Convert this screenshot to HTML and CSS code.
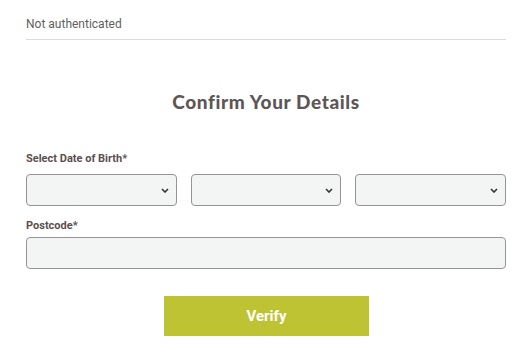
FILE: index.html
```html
<!DOCTYPE html>
<html>
<head>
<meta charset="utf-8">
<link rel="stylesheet" href="styles.css">
</head>
<body>
<div class="page">
  <div class="status">Not authenticated</div>
  <h1 class="title">Confirm Your Details</h1>
  <form class="form">
    <label class="label">Select Date of Birth*</label>
    <div class="dob">
      <div class="select-wrap">
        <select class="field"><option></option></select>
        <svg class="chev" width="8" height="5" viewBox="0 0 8 5"><path d="M1 1l3 3 3-3" fill="none" stroke="#333" stroke-width="1.6"/></svg>
      </div>
      <div class="select-wrap">
        <select class="field"><option></option></select>
        <svg class="chev" width="8" height="5" viewBox="0 0 8 5"><path d="M1 1l3 3 3-3" fill="none" stroke="#333" stroke-width="1.6"/></svg>
      </div>
      <div class="select-wrap">
        <select class="field"><option></option></select>
        <svg class="chev" width="8" height="5" viewBox="0 0 8 5"><path d="M1 1l3 3 3-3" fill="none" stroke="#333" stroke-width="1.6"/></svg>
      </div>
    </div>
    <label class="label">Postcode*</label>
    <input class="field input" type="text">
    <div class="actions">
      <button type="button" class="btn">Verify</button>
    </div>
  </form>
</div>
</body>
</html>
```

FILE: styles.css
```css
* { box-sizing: border-box; }
body {
  margin: 0;
  background: #fff;
  font-family: Roboto, "Liberation Sans", sans-serif;
}
.page {
  width: 480px;
  margin-left: 26px;
  padding-top: 16px;
}
.status {
  font-size: 12px;
  line-height: 16px;
  color: #5f5f5f;
  padding-bottom: 7px;
  border-bottom: 1px solid #dcdcdc;
}
.title {
  margin: 50px 0 0;
  text-align: center;
  font-family: Lato, sans-serif;
  font-weight: 900;
  font-size: 19px;
  line-height: 24px;
  letter-spacing: 0.6px;
  color: #5d5656;
}
.form {
  display: flex;
  flex-direction: column;
  margin-top: 38px;
}
.label {
  font-size: 11px;
  line-height: 14px;
  font-weight: 700;
  color: #5b4f4f;
}
.dob {
  display: grid;
  grid-template-columns: 1fr 1fr 1fr;
  gap: 14px;
  margin: 8px 0 13px;
}
.select-wrap {
  position: relative;
}
.chev {
  position: absolute;
  right: 8px;
  top: 14px;
  pointer-events: none;
}
.field {
  display: block;
  height: 32px;
  border: 1.5px solid #949494;
  border-radius: 4px;
  background-color: #f3f5f4;
  font-family: inherit;
  font-size: 12px;
  width: 100%;
  color: #333;
  appearance: none;
  -webkit-appearance: none;
}
.input {
  margin-top: 4px;
}
.actions {
  display: flex;
  justify-content: center;
  margin-top: 27px;
}
.btn {
  width: 205px;
  height: 40px;
  border: none;
  background: #bec334;
  color: #fff;
  font-family: Roboto, sans-serif;
  font-weight: 700;
  font-size: 15px;
  margin-left: 1px;
}
```
